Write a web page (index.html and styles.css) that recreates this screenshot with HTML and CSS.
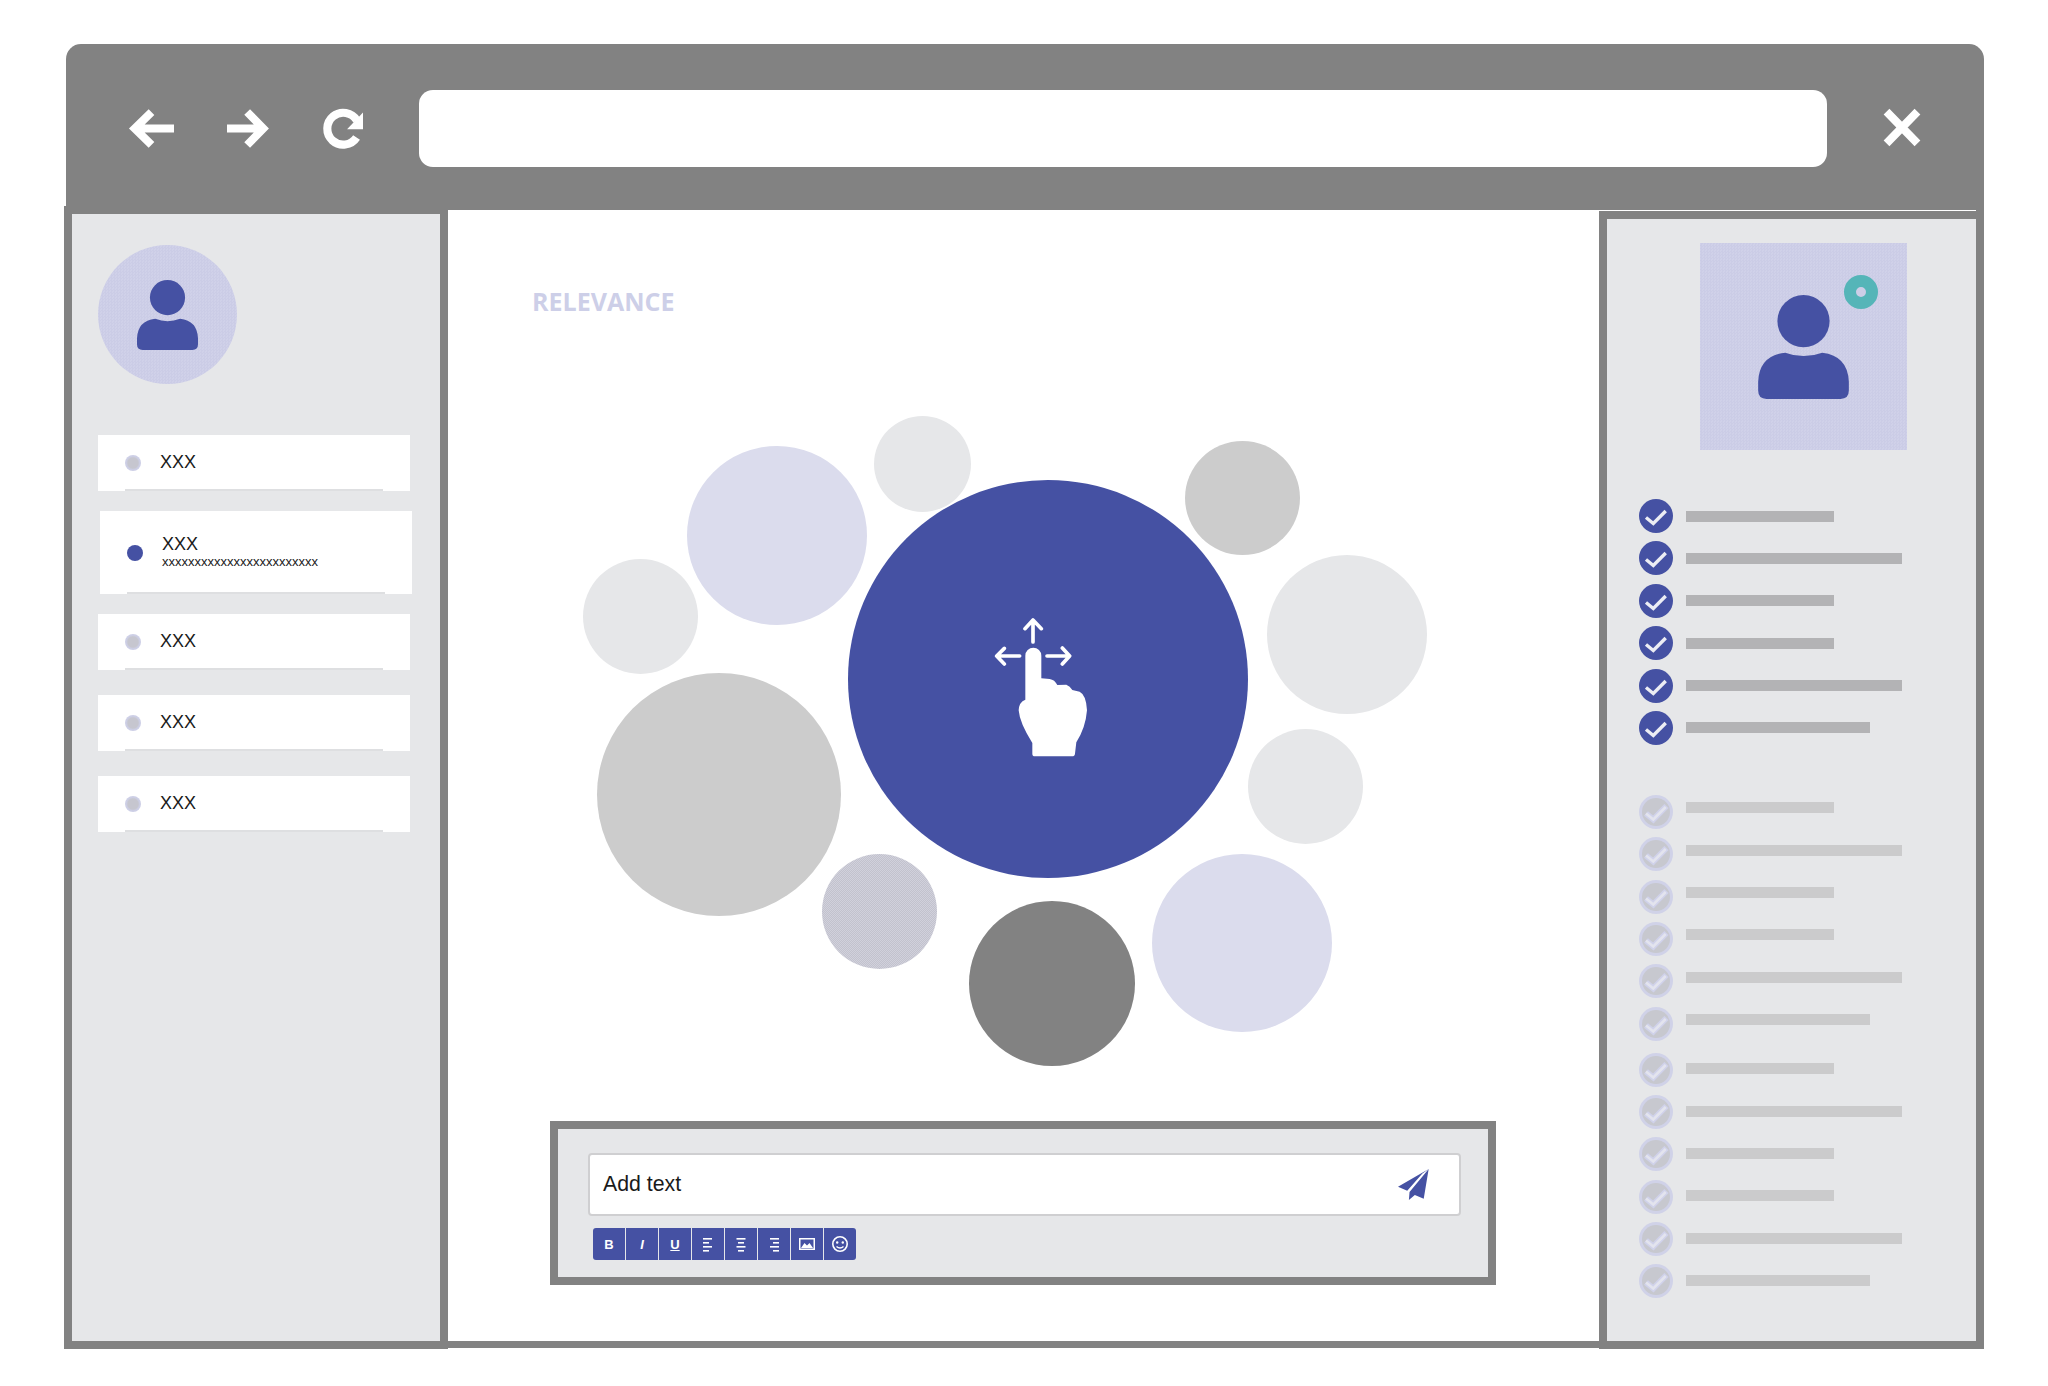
FILE: index.html
```html
<!DOCTYPE html>
<html lang="en">
<head>
<meta charset="utf-8">
<title>Relevance</title>
<link rel="stylesheet" href="styles.css">
</head>
<body>
<svg class="sprite" xmlns="http://www.w3.org/2000/svg">
  <symbol id="person" viewBox="290 749 184 211">
    <circle cx="382" cy="802" r="53"/>
    <path d="M290 925Q292 872 345 866Q382 880 420 866Q472 872 474 925V943Q474 960 457 960H307Q290 960 290 943Z"/>
  </symbol>
  <symbol id="check-on" viewBox="0 0 34 34">
    <circle cx="17" cy="17" r="17" fill="#4551a3"/>
    <path d="M7 18.5L14.3 24.5L26.7 12" fill="none" stroke="#eceDf4" stroke-width="3.4"/>
  </symbol>
  <symbol id="check-off" viewBox="0 0 34 34">
    <circle cx="17" cy="17" r="17" fill="#d0d2e8"/>
    <circle cx="17" cy="17" r="14" fill="#c7c8cf"/>
    <path d="M7 18.5L14.3 24.5L27.5 11" fill="none" stroke="#d0d2ea" stroke-width="6"/>
    <path d="M7 18.5L14.3 24.5L26.7 12" fill="none" stroke="#e3e4ee" stroke-width="2.6"/>
  </symbol>
</svg>

<div class="window">
  <header class="toolbar">
    <svg class="nav nav-back" viewBox="268 242 134 110"><path d="M402 297H285M335 248L285 297L335 346"/></svg>
    <svg class="nav nav-forward" viewBox="560 242 125 110"><path d="M560 297H668M620 248L668 297L620 346"/></svg>
    <svg class="nav nav-reload" viewBox="848 238 118 118"><path d="M947 322A47 47 0 1 1 948 272"/><polygon points="966,248 966,298 919,298"/></svg>
    <div class="address"></div>
    <svg class="nav nav-close" viewBox="250 208 112 110"><path d="M260 216L352 310M352 216L260 310"/></svg>
  </header>

  <div class="body">
    <aside class="panel-left">
      <div class="avatar"><svg class="avatar-person"><use href="#person"/></svg></div>
      <ul class="threads">
        <li class="thread"><span class="dot"></span><div class="thread-name">XXX</div></li>
        <li class="thread thread-active"><span class="dot dot-active"></span><div><div class="thread-name">XXX</div><div class="thread-sub">xxxxxxxxxxxxxxxxxxxxxxxx</div></div></li>
        <li class="thread"><span class="dot"></span><div class="thread-name">XXX</div></li>
        <li class="thread"><span class="dot"></span><div class="thread-name">XXX</div></li>
        <li class="thread"><span class="dot"></span><div class="thread-name">XXX</div></li>
      </ul>
    </aside>

    <main class="panel-main">
      <h1 class="title">RELEVANCE</h1>
      <div class="stage">
        <span class="bubble b-lav b1"></span>
        <span class="bubble b-light b2"></span>
        <span class="bubble b-grey b3"></span>
        <span class="bubble b-light b4"></span>
        <span class="bubble b-light b5"></span>
        <span class="bubble b-grey b6"></span>
        <span class="bubble b-light b7"></span>
        <span class="bubble b-dither b8"></span>
        <span class="bubble b-dark b9"></span>
        <span class="bubble b-lav b10"></span>
        <span class="bubble b-main">
          <svg class="gesture" viewBox="100 80 290 425">
            <path class="gesture-hand" d="M197 196A24 24 0 0 1 245 196V264L270 266Q285 268 293 284L320 283Q331 287 338 299L360 304Q380 314 382 360Q378 412 350 456L346 490Q345 498 337 498H226Q218 498 218 490V458Q180 398 177 360Q178 335 197 328Z"/>
            <path class="gesture-arrow" d="M220 155V90M196 115L220 89L245 115M180 197H113M134 174L111 197L134 221M262 197H328M308 173L330 197L308 221"/>
          </svg>
        </span>
      </div>
      <section class="composer">
        <div class="input">
          <span class="input-text">Add text</span>
          <svg class="send" viewBox="294 176 94 94"><polygon points="387,176 294,230 322,242 368,190"/><polygon points="387,176 329,246 327,270 345,255 372,266"/></svg>
        </div>
        <div class="format">
          <span class="fmt fmt-first"><span class="fmt-b">B</span></span>
          <span class="fmt"><span class="fmt-i">I</span></span>
          <span class="fmt"><span class="fmt-u">U</span></span>
          <span class="fmt"><svg class="fmt-icon" viewBox="0 0 32 32"><rect x="11" y="10" width="9" height="1.6"/><rect x="11" y="14" width="6" height="1.6"/><rect x="11" y="18" width="9" height="1.6"/><rect x="11" y="22" width="6" height="1.6"/></svg></span>
          <span class="fmt"><svg class="fmt-icon" viewBox="0 0 32 32"><rect x="11.500" y="10" width="9" height="1.6"/><rect x="13" y="14" width="6" height="1.6"/><rect x="11.500" y="18" width="9" height="1.6"/><rect x="13" y="22" width="6" height="1.6"/></svg></span>
          <span class="fmt"><svg class="fmt-icon" viewBox="0 0 32 32"><rect x="12" y="10" width="9" height="1.6"/><rect x="15" y="14" width="6" height="1.6"/><rect x="12" y="18" width="9" height="1.6"/><rect x="15" y="22" width="6" height="1.6"/></svg></span>
          <span class="fmt"><svg class="fmt-icon" viewBox="0 0 32 32"><path d="M8 10H24V22H8ZM9.500 11.500V20.500H22.500V11.500Z" fill-rule="evenodd"/><path d="M10 20L13.500 15L16 17.500L18.500 15L22 20Z"/></svg></span>
          <span class="fmt fmt-last"><svg class="fmt-icon" viewBox="0 0 32 32"><circle class="smile-face" cx="16" cy="16" r="7.200"/><circle cx="13.200" cy="14.500" r="1.200"/><circle cx="18.800" cy="14.500" r="1.200"/><path class="smile-mouth" d="M12.500 18.500Q16 21.500 19.500 18.500"/></svg></span>
        </div>
      </section>
    </main>

    <aside class="panel-right">
      <div class="profile">
        <svg class="profile-person"><use href="#person"/></svg>
        <span class="status"></span>
      </div>
      <ul class="checks">
        <li class="check"><svg class="tick"><use href="#check-on"/></svg><span class="bar bar-s"></span></li>
        <li class="check"><svg class="tick"><use href="#check-on"/></svg><span class="bar bar-l"></span></li>
        <li class="check"><svg class="tick"><use href="#check-on"/></svg><span class="bar bar-s"></span></li>
        <li class="check"><svg class="tick"><use href="#check-on"/></svg><span class="bar bar-s"></span></li>
        <li class="check"><svg class="tick"><use href="#check-on"/></svg><span class="bar bar-l"></span></li>
        <li class="check"><svg class="tick"><use href="#check-on"/></svg><span class="bar bar-m"></span></li>
      </ul>
      <ul class="checks checks-off checks-raised">
        <li class="check"><svg class="tick"><use href="#check-off"/></svg><span class="bar bar-s"></span></li>
        <li class="check"><svg class="tick"><use href="#check-off"/></svg><span class="bar bar-l"></span></li>
        <li class="check"><svg class="tick"><use href="#check-off"/></svg><span class="bar bar-s"></span></li>
        <li class="check"><svg class="tick"><use href="#check-off"/></svg><span class="bar bar-s"></span></li>
        <li class="check"><svg class="tick"><use href="#check-off"/></svg><span class="bar bar-l"></span></li>
        <li class="check"><svg class="tick"><use href="#check-off"/></svg><span class="bar bar-m"></span></li>
      </ul>
      <ul class="checks checks-off checks-last">
        <li class="check"><svg class="tick"><use href="#check-off"/></svg><span class="bar bar-s"></span></li>
        <li class="check"><svg class="tick"><use href="#check-off"/></svg><span class="bar bar-l"></span></li>
        <li class="check"><svg class="tick"><use href="#check-off"/></svg><span class="bar bar-s"></span></li>
        <li class="check"><svg class="tick"><use href="#check-off"/></svg><span class="bar bar-s"></span></li>
        <li class="check"><svg class="tick"><use href="#check-off"/></svg><span class="bar bar-l"></span></li>
        <li class="check"><svg class="tick"><use href="#check-off"/></svg><span class="bar bar-m"></span></li>
      </ul>
    </aside>
  </div>
</div>
</body>
</html>
```

FILE: styles.css
```css
* { box-sizing: border-box; }

html, body {
  margin: 0;
  background: #fff;
}

body {
  height: 1386px;
  overflow: hidden;
  font-family: "Liberation Sans", Arial, sans-serif;
  color: #1a1a1a;
}

ul { list-style: none; margin: 0; padding: 0; }

.sprite { display: none; }

.window {
  width: 1920px;
  margin: 44px 0 0 64px;
}

/* Browser bar */
.toolbar {
  display: flex;
  align-items: center;
  height: 166px;
  margin-left: 2px;
  padding: 3px 0 0 63px;
  background: #828282;
  border-radius: 15px 15px 0 0;
}

.nav { display: block; flex: none; overflow: visible; }
.nav path { fill: none; stroke: #fff; stroke-width: 24; }
.nav polygon { fill: #fff; }
.nav-back { width: 45px; height: 37px; }
.nav-forward { width: 42px; height: 37px; margin-left: 53px; }
.nav-reload { width: 40px; height: 40px; margin-left: 54px; }
.nav-close { width: 38px; height: 37px; margin: -3px 0 0 56px; }

.address {
  flex: none;
  width: 1408px;
  height: 77px;
  margin-left: 56px;
  background: #fff;
  border-radius: 14px;
}

/* Body */
.body {
  display: flex;
  align-items: flex-start;
}

/* Left panel */
.panel-left {
  position: relative;
  flex: none;
  width: 384px;
  height: 1143px;
  margin-top: -4px;
  padding: 31px 0 0 26px;
  background: #e6e7e9;
  border: 8px solid #828282;
}

.avatar {
  display: flex;
  align-items: center;
  justify-content: center;
  width: 139px;
  height: 139px;
  border-radius: 50%;
  background: repeating-conic-gradient(#cbcce6 0 25%, #d0d1e9 0 50%) 0 0 / 3px 3px;
}

.avatar-person {
  width: 61px;
  height: 70px;
  fill: #4551a3;
}

.threads {
  display: flex;
  flex-direction: column;
  margin-top: 51px;
}

.thread {
  position: relative;
  display: flex;
  align-items: center;
  gap: 19px;
  width: 312px;
  height: 56px;
  margin-bottom: 25px;
  padding-left: 27px;
  background: #fff;
}

.thread::after {
  content: "";
  position: absolute;
  left: 27px;
  right: 27px;
  bottom: 0;
  height: 2px;
  background: #dedfe1;
}

.thread:first-child { margin-bottom: 20px; }

.thread-active {
  height: 83px;
  margin: 0 0 20px 2px;
}

.dot {
  flex: none;
  width: 16px;
  height: 16px;
  border-radius: 50%;
  background: radial-gradient(circle, #c6c6cf 0 45%, #cdcfe6 60%);
}

.dot-active { background: #4551a3; }

.thread-name {
  font-size: 18px;
  line-height: 20px;
  margin-top: -3px;
}

.thread-sub {
  font-size: 13px;
  line-height: 13px;
  margin-top: 1px;
}

/* Main panel */
.panel-main {
  flex: none;
  width: 1152px;
  height: 1138px;
  padding-top: 75px;
  background: #fff;
  border-bottom: 7px solid #828282;
}

.title {
  margin: 0 0 0 84px;
  font-family: "Open Sans", sans-serif;
  font-size: 25px;
  line-height: 33px;
  font-weight: 700;
  color: #cdcfe8;
}

.stage {
  position: relative;
  width: 870px;
  height: 680px;
  margin: 82px 0 0 122px;
}

.bubble {
  position: absolute;
  display: block;
  border-radius: 50%;
}

.b-lav { background: #dbdced; }
.b-light { background: #e6e7e9; }
.b-grey { background: #cccccc; }
.b-dark { background: #828282; }
.b-dither { background: repeating-conic-gradient(#c2c2cd 0 25%, #d1d1dc 0 50%) 0 0 / 2px 2px; }

.b1 { left: 117px; top: 46px; width: 180px; height: 179px; }
.b2 { left: 304px; top: 16px; width: 97px; height: 96px; }
.b3 { left: 615px; top: 41px; width: 115px; height: 114px; }
.b4 { left: 697px; top: 155px; width: 160px; height: 159px; }
.b5 { left: 13px; top: 159px; width: 115px; height: 115px; }
.b6 { left: 27px; top: 273px; width: 244px; height: 243px; }
.b7 { left: 678px; top: 329px; width: 115px; height: 115px; }
.b8 { left: 252px; top: 454px; width: 115px; height: 115px; }
.b9 { left: 399px; top: 501px; width: 166px; height: 165px; }
.b10 { left: 582px; top: 454px; width: 180px; height: 178px; }

.b-main {
  left: 278px;
  top: 80px;
  width: 400px;
  height: 398px;
  background: #4551a3;
}

.gesture {
  position: absolute;
  left: 145px;
  top: 137px;
  width: 96.67px;
  height: 141.67px;
}

.gesture-hand { fill: #fff; }

.gesture-arrow {
  fill: none;
  stroke: #fff;
  stroke-width: 11;
  stroke-linecap: round;
  stroke-linejoin: round;
}

/* Composer */
.composer {
  width: 946px;
  height: 164px;
  margin: 41px 0 0 102px;
  padding: 24px 0 0 30px;
  background: #e6e7e9;
  border: 8px solid #828282;
}

.input {
  display: flex;
  align-items: center;
  justify-content: space-between;
  width: 873px;
  height: 63px;
  padding: 0 30px 0 13px;
  background: #fff;
  border: 2px solid #cfcfd1;
  border-radius: 4px;
}

.input-text {
  font-size: 21.3px;
}

.send {
  width: 31px;
  height: 31px;
  fill: #4551a3;
}

.format {
  display: flex;
  gap: 1px;
  margin: 12px 0 0 5px;
}

.fmt {
  display: flex;
  align-items: center;
  justify-content: center;
  width: 32px;
  height: 32px;
  background: #4551a3;
  color: #fff;
  font-size: 13px;
  font-weight: 700;
}

.fmt-first { border-radius: 3px 0 0 3px; }
.fmt-last { border-radius: 0 3px 3px 0; }
.fmt-i { font-style: italic; }
.fmt-u { text-decoration: underline; }
.fmt-icon { width: 32px; height: 32px; fill: #fff; }
.smile-face { fill: none; stroke: #fff; stroke-width: 1.6; }
.smile-mouth { fill: none; stroke: #fff; stroke-width: 1.4; }

/* Right panel */
.panel-right {
  position: relative;
  flex: none;
  width: 385px;
  height: 1139px;
  margin-left: -1px;
  padding-top: 24px;
  background: #e6e7e9;
  border: 8px solid #828282;
  border-top-width: 9px;
}

.panel-right::before {
  content: "";
  position: absolute;
  top: -9px;
  left: -8px;
  right: 0;
  height: 1px;
  background: #fff;
}

.profile {
  position: relative;
  display: flex;
  align-items: center;
  justify-content: center;
  width: 207px;
  height: 207px;
  margin-left: 93px;
  background: repeating-conic-gradient(#cbcce6 0 25%, #d0d1e9 0 50%) 0 0 / 3px 3px;
}

.profile-person {
  width: 91px;
  height: 104px;
  fill: #4551a3;
}

.status {
  position: absolute;
  left: 144px;
  top: 32px;
  width: 34px;
  height: 34px;
  border-radius: 50%;
  border: 12px solid #55b5b8;
  background: #cdcee7;
}

.checks {
  display: flex;
  flex-direction: column;
  gap: 8.4px;
  margin-top: 49px;
  padding-left: 32px;
}

.checks-off { gap: 8.35px; }
.checks-raised { margin-top: 50px; }
.checks-last { margin-top: 12px; }

.check {
  display: flex;
  align-items: center;
  gap: 13px;
  height: 34px;
}

.tick { flex: none; width: 34px; height: 34px; }

.bar {
  display: block;
  height: 11px;
  background: #b3b3b5;
}

.checks-off .bar { background: #cbcbcc; }
.checks-raised .bar { margin-bottom: 8px; }
.checks-last .bar { margin-bottom: 2px; }
.bar-s { width: 148px; }
.bar-m { width: 184px; }
.bar-l { width: 216px; }
```
